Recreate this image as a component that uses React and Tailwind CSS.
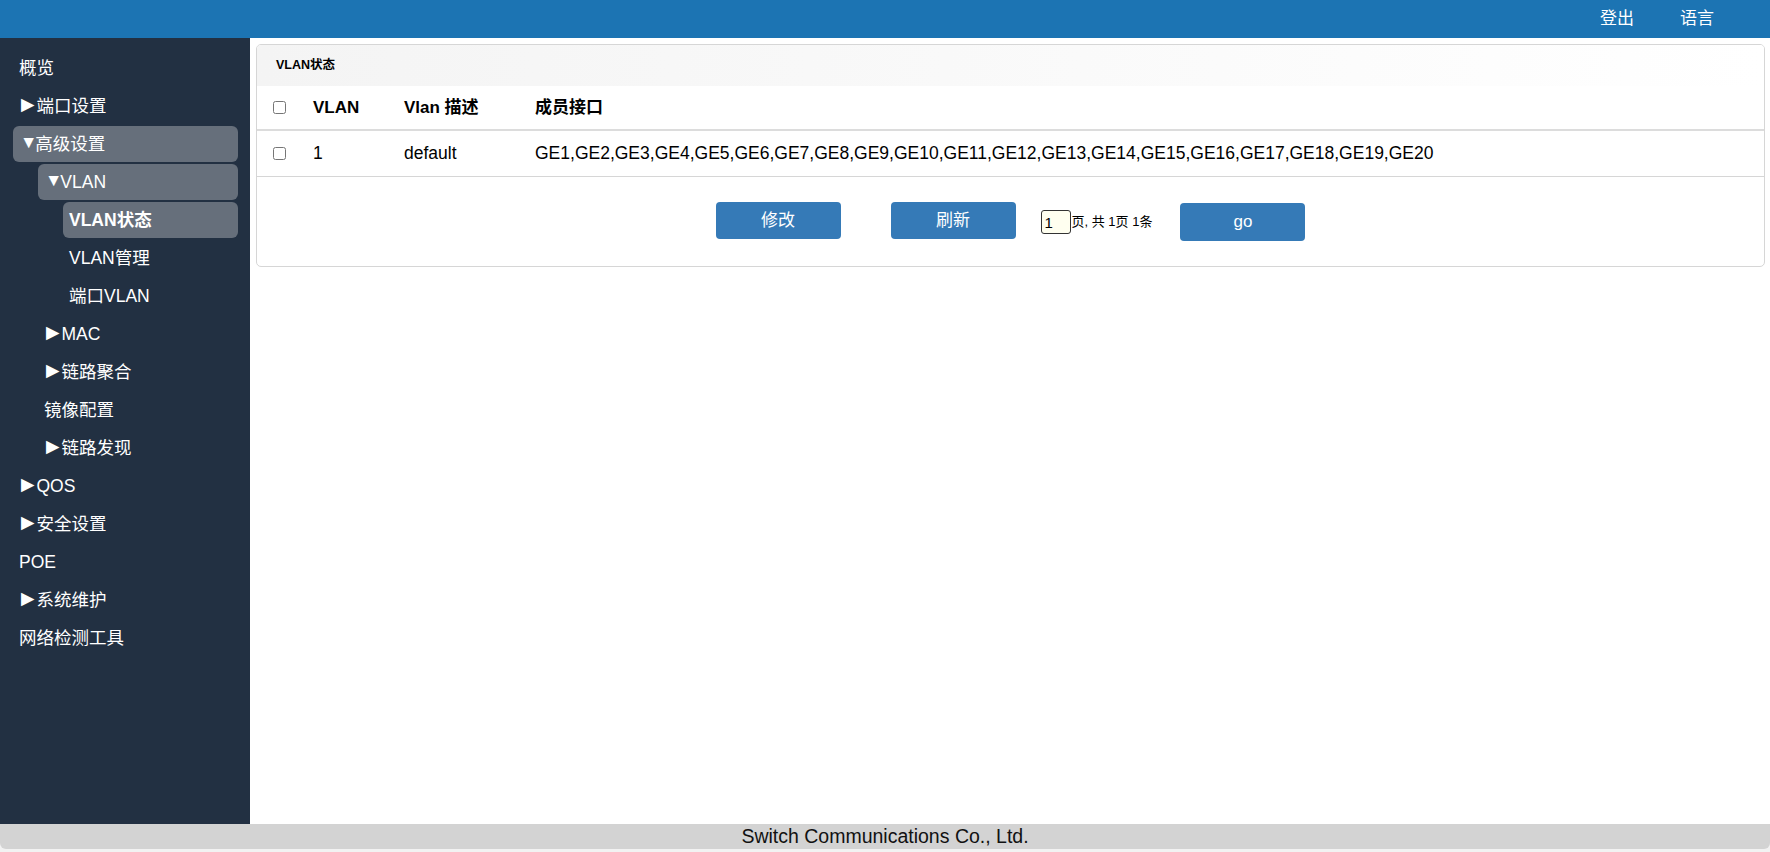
import React from 'react';

const menu = [
  { label: '概览', level: 0 },
  { label: '端口设置', level: 0, arrow: '▶' },
  { label: '高级设置', level: 0, arrow: '▼', active: true },
  { label: 'VLAN', level: 1, arrow: '▼', active: true },
  { label: 'VLAN状态', level: 2, active: true, bold: true },
  { label: 'VLAN管理', level: 2 },
  { label: '端口VLAN', level: 2 },
  { label: 'MAC', level: 1, arrow: '▶' },
  { label: '链路聚合', level: 1, arrow: '▶' },
  { label: '镜像配置', level: 1 },
  { label: '链路发现', level: 1, arrow: '▶' },
  { label: 'QOS', level: 0, arrow: '▶' },
  { label: '安全设置', level: 0, arrow: '▶' },
  { label: 'POE', level: 0 },
  { label: '系统维护', level: 0, arrow: '▶' },
  { label: '网络检测工具', level: 0 },
];

const indent = ['ml-[13px]', 'ml-[38px]', 'ml-[63px]'];

const members = Array.from({ length: 20 }, (_, i) => `GE${i + 1}`).join(',');

const font = 'font-["Liberation_Sans","DejaVu_Sans","Noto_Sans_CJK_SC",sans-serif]';

const App = () => {
  return (
    <div className={`h-screen flex flex-col bg-[#f2f2f2] overflow-hidden ${font}`}>
      {/* Top bar */}
      <div className="h-[38px] shrink-0 bg-[#1c74b3] flex items-center justify-end gap-[46px] pr-[56px] text-white text-[17px]">
        <span>登出</span>
        <span>语言</span>
      </div>

      <div className="flex-1 flex min-h-0">
        {/* Sidebar */}
        <div className="w-[250px] shrink-0 bg-[#223042] pt-[12px]">
          {menu.map((item, i) => (
            <div
              key={i}
              className={`${indent[item.level]} mr-[12px] mb-[2px] h-[36px] flex items-center pl-[6px] rounded-[6px] text-white text-[17.5px] ${item.active ? 'bg-[#666f7b]' : ''} ${item.bold ? 'font-bold' : ''}`}
            >
              {item.arrow === '▶' && <span className="text-[17.5px] -mt-[3px] ml-[2px] mr-[2px]">▶</span>}
              {item.arrow === '▼' && <span className="text-[17.5px] -mt-[3px] ml-[1px] -mr-[2px]">▼</span>}
              <span>{item.label}</span>
            </div>
          ))}
        </div>

        {/* Main */}
        <div className="flex-1 bg-white pt-[6px] pl-[6px] pr-[5px]">
          <div className="border border-[#d6d6d6] rounded-[5px] overflow-hidden">
            <div className="h-[41px] flex items-center pl-[19px] bg-linear-to-r from-[#f4f4f4] to-white text-[12.5px] font-bold text-black">
              VLAN状态
            </div>

            <div className="h-[45px] flex items-center pl-[16px] border-b-2 border-[#dcdcdc] text-[17px] font-bold text-black">
              <div className="w-[40px] flex items-center">
                <input type="checkbox" className="w-[13px] h-[13px] m-0" />
              </div>
              <div className="w-[91px]">VLAN</div>
              <div className="w-[131px]">Vlan 描述</div>
              <div>成员接口</div>
            </div>

            <div className="h-[46px] flex items-center pl-[16px] border-b border-[#d6d6d6] text-[17.5px] text-black">
              <div className="w-[40px] flex items-center">
                <input type="checkbox" className="w-[13px] h-[13px] m-0" />
              </div>
              <div className="w-[91px]">1</div>
              <div className="w-[131px]">default</div>
              <div>{members}</div>
            </div>

            <div className="flex items-start justify-center pt-[25px] pb-[24px] text-black">
              <button className="w-[125px] h-[37px] rounded-[4px] bg-[#357ab7] text-white text-[17px]">修改</button>
              <button className="ml-[50px] w-[125px] h-[37px] rounded-[4px] bg-[#357ab7] text-white text-[17px]">刷新</button>
              <div className="ml-[25px] h-[40px] flex items-center">
                <input
                  defaultValue="1"
                  className="w-[30px] h-[24px] rounded-[3px] border border-[#333] bg-[#fffff0] pl-[3px] text-[15px] outline-none"
                />
                <span className="text-[13px] ml-[1px]">页, 共 1页 1条</span>
              </div>
              <button className="ml-[28px] mt-[1px] w-[125px] h-[38px] rounded-[4px] bg-[#357ab7] text-white text-[17px]">go</button>
            </div>
          </div>
        </div>
      </div>

      {/* Footer */}
      <div className="h-[25px] shrink-0 mb-[3px] bg-[#d3d3d3] rounded-b-[6px] flex items-center justify-center text-[19.5px] text-[#111]">
        Switch Communications Co., Ltd.
      </div>
    </div>
  );
};

export default App;
